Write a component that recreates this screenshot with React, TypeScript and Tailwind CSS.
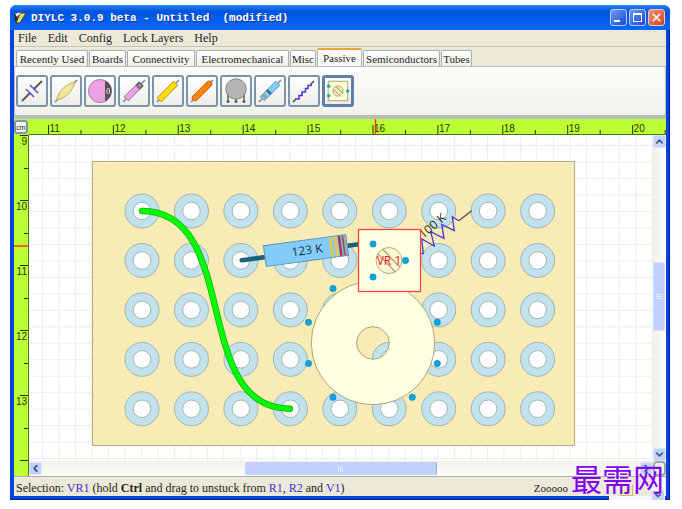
import React, { useState } from 'react';
import { ChevronDown, ChevronLeft, ChevronUp, X } from 'lucide-react';

const MENUS = ['File', 'Edit', 'Config', 'Lock Layers', 'Help'];

const TABS = [
  { label: 'Recently Used', width: 'w-[72px]' },
  { label: 'Boards', width: 'w-[37px]' },
  { label: 'Connectivity', width: 'w-[68px]' },
  { label: 'Electromechanical', width: 'w-[93px]' },
  { label: 'Misc', width: 'w-[26px]' },
  { label: 'Passive', width: 'w-[45px]' },
  { label: 'Semiconductors', width: 'w-[77px]' },
  { label: 'Tubes', width: 'w-[31px]' },
];

const PITCH = 49.45;
const PADS = Array.from({ length: 45 }, (_, i) => ({
  x: 113 + (i % 9) * PITCH,
  y: 76 + Math.floor(i / 9) * PITCH,
}));

const TRANSFORMER_PINS = [
  [304, 153.5], [279.5, 187.3], [279.5, 228.5], [304, 262.3],
  [383.3, 262.3], [408.3, 228.5], [408.3, 187.3],
];

const leads = (
  <path d="M5 27 10 22M22 10 27 5" stroke="#6f93a5" strokeWidth="1.6" />
);

const TOOLS = [
  {
    name: 'Capacitor',
    icon: (
      <>
        <path d="M6 26 14 18M18 14 26 6" stroke="#555" strokeWidth="1.8" />
        <path d="M10 14 18 22M14 10 22 18" stroke="#5a50d8" strokeWidth="1.6" />
      </>
    ),
  },
  {
    name: 'Film capacitor',
    icon: (
      <>
        {leads}
        <path d="M7 25C8 17 15 9 25 7 23 16 16 23 7 25Z" fill="#f3e69b" stroke="#b8ac66" />
      </>
    ),
  },
  {
    name: 'Electrolytic capacitor',
    icon: (
      <>
        <circle cx="16" cy="16" r="11.5" fill="#eda2e3" stroke="#ad75a8" />
        <path d="M21 5.6A11.5 11.5 0 0 1 21 26.400Z" fill="#57505a" />
        <rect x="23" y="13.5" width="2.5" height="5" rx="1" fill="none" stroke="#ddd" />
      </>
    ),
  },
  {
    name: 'Axial capacitor',
    icon: (
      <>
        {leads}
        <path d="M8 24 23 9" stroke="#a36f9f" strokeWidth="6.5" />
        <path d="M8.5 23.5 22.5 9.5" stroke="#eda2e3" strokeWidth="4.8" />
        <path d="M19.5 12.5 23.500 8.500" stroke="#6f6770" strokeWidth="6.5" />
        <circle cx="21.500" cy="10.500" r="1.200" fill="#aaa" />
      </>
    ),
  },
  {
    name: 'Inductor',
    icon: (
      <>
        {leads}
        <path d="M7 25 24 8" stroke="#b39a20" strokeWidth="6.5" />
        <path d="M7.5 24.5 23.5 8.5" stroke="#ffdc08" strokeWidth="4.8" />
      </>
    ),
  },
  {
    name: 'Radial inductor',
    icon: (
      <>
        {leads}
        <path d="M9 23 23 9" stroke="#b86018" strokeWidth="6.5" strokeLinecap="round" />
        <path d="M9 23 23 9" stroke="#ff8408" strokeWidth="5" strokeLinecap="round" />
      </>
    ),
  },
  {
    name: 'Potentiometer',
    icon: (
      <>
        <path d="M8 18V26M16 20V26M24 18V26" stroke="#777" strokeWidth="1.8" />
        <circle cx="16" cy="14" r="10.2" fill="#b5b5b5" stroke="#858585" />
        <circle cx="8" cy="26.500" r="1.600" fill="#666" />
        <circle cx="16" cy="26.500" r="1.600" fill="#666" />
        <circle cx="24" cy="26.500" r="1.600" fill="#666" />
      </>
    ),
  },
  {
    name: 'Resistor',
    icon: (
      <>
        {leads}
        <path d="M8 24 24 8" stroke="#5f9dc4" strokeWidth="6.5" />
        <path d="M8.5 23.5 23.5 8.5" stroke="#85cbf8" strokeWidth="4.8" />
        <path d="M9.500 22.500 12 20" stroke="#8da7a7" strokeWidth="6" />
        <path d="M14 18 15.800 16.200" stroke="#34718f" strokeWidth="6" />
      </>
    ),
  },
  {
    name: 'Resistor symbol',
    icon: (
      <>
        <path d="M5 27 8 24M23 9 26 6" stroke="#444" strokeWidth="1.5" />
        <path d="M7 24H11V20.500H14V17H17.500V13.500H20V10.500H23V8.500" fill="none" stroke="#463ddd" strokeWidth="1.6" />
      </>
    ),
  },
  {
    name: 'Trimmer',
    icon: (
      <>
        <rect x="5.500" y="5.500" width="21" height="21" fill="#ffffdc" stroke="#aaa36a" />
        <circle cx="16" cy="16" r="5.500" fill="#f6edb9" stroke="#aaa36a" />
        <path d="M11.500 14.500 17.500 20.500M14 11.500 20.500 18" stroke="#8d895c" />
        <circle cx="6" cy="11" r="1.900" fill="#23a6aa" />
        <circle cx="6" cy="21" r="1.900" fill="#23a6aa" />
        <circle cx="26.500" cy="16" r="1.900" fill="#23a6aa" />
      </>
    ),
  },
];

function TitleBar() {
  return (
    <header className="flex h-[25px] shrink-0 items-center gap-[5px] rounded-t-[6px] bg-linear-to-b from-[#2c86f4] via-[#0054df] via-25% to-[#0768ff] pr-[5px] pl-[4px]">
      <svg className="h-[13px] w-[12px]" viewBox="0 0 12 13" aria-hidden="true">
        <path d="M0 2H7L4 11H1Z" fill="#222e3d" />
        <path d="M6 2H12L6 12H2Z" fill="#e8d86c" stroke="#473f2c" />
        <path d="M1 2.500 7 1.500 3 6Z" fill="#eee" />
      </svg>
      <h1 className="flex-1 whitespace-pre font-['Liberation_Mono',monospace] text-[11px] font-bold text-white [text-shadow:1px_1px_#123a9a]">
        DIYLC 3.0.9 beta - Untitled  (modified)
      </h1>
      <div className="flex gap-[2px]">
        <button aria-label="Minimize" className="flex size-[17px] items-end rounded-[3px] border border-[#b7cdf8] bg-linear-to-br from-[#7197f4] to-[#1746d5] p-[3px]">
          <span className="h-[2px] w-[6px] bg-white" />
        </button>
        <button aria-label="Maximize" className="flex size-[17px] items-center justify-center rounded-[3px] border border-[#b7cdf8] bg-linear-to-br from-[#7197f4] to-[#1746d5]">
          <span className="size-[9px] border border-t-2 border-white" />
        </button>
        <button aria-label="Close" className="flex size-[17px] items-center justify-center rounded-[3px] border border-[#f2c9bd] bg-linear-to-br from-[#f09275] to-[#d43d12]">
          <X className="size-[13px] text-white" strokeWidth={3} />
        </button>
      </div>
    </header>
  );
}

function HorizontalRuler() {
  return (
    <svg className="h-[16px] min-w-0 flex-1 border-b border-[#4f7319] font-['Liberation_Sans',sans-serif]" aria-label="Horizontal ruler">
      {Array.from({ length: 10 }, (_, i) => {
        const x = 19.5 + i * 64.9;
        return (
          <g key={i}>
            <path d={`M${x} 6V15M${x + 32.5} 11V15`} stroke="#27360b" />
            <text x={x + 1} y="13" fontSize="10" fill="#27360b">{11 + i}</text>
          </g>
        );
      })}
      <path d="M346.5 0V15" stroke="#f8301c" strokeWidth="1.4" />
    </svg>
  );
}

function VerticalRuler() {
  return (
    <svg className="h-full w-[15px] shrink-0 border-r border-[#4f7319]" aria-label="Vertical ruler">
      {Array.from({ length: 6 }, (_, i) => {
        const y = 0.5 + i * 65;
        return (
          <g key={i}>
            <path d={`M6 ${y}H14M10 ${y + 33}H14`} stroke="#27360b" />
            {i < 5 && <text x="13" y={y + 9} textAnchor="end" fontSize="10" fill="#27360b">{9 + i}</text>}
          </g>
        );
      })}
      <path d="M0 111H14" stroke="#f8301c" strokeWidth="1.4" />
    </svg>
  );
}

function Board() {
  return (
    <svg className="min-h-0 w-full flex-1 bg-white font-['Open_Sans',sans-serif]" role="img" aria-label="Circuit layout">
      <defs>
        <pattern id="grid" x="13" y="10" width="16.48" height="16.48" patternUnits="userSpaceOnUse">
          <path d="M0 .5H16.5M.5 0V16.5" stroke="#ececec" fill="none" />
        </pattern>
      </defs>
      <rect width="100%" height="100%" fill="url(#grid)" />
      <rect x="63.5" y="26.5" width="482" height="284" fill="#f8ebb5" stroke="#b5ac83" />

      {PADS.map(({ x, y }) => (
        <g key={`${x}-${y}`} stroke="#a4b3ae">
          <circle cx={x} cy={y} r="17" fill="#c1e2ec" />
          <circle cx={x} cy={y} r="8.8" fill="#fff" />
        </g>
      ))}

      {/* jumper wire */}
      <g fill="none" strokeLinecap="round">
        <path d="M113 76C213 76 161 273.800 261 273.800" stroke="#0bbd0b" strokeWidth="6.500" />
        <path d="M113 76C213 76 161 273.800 261 273.800" stroke="#08f808" strokeWidth="4.800" />
      </g>

      {/* R1 */}
      <g transform="translate(277 115.500) rotate(-7.800)">
        <path d="M-65 1H55" stroke="#1e6280" strokeWidth="4.500" strokeLinecap="round" />
        <rect x="-41.5" y="-10.5" width="83" height="21" fill="#83cbfb" stroke="#6099b8" />
        <path d="M25.500 -10V10M30.500 -10V10" stroke="#d8c95d" strokeWidth="3" />
        <path d="M34.500 -10V10" stroke="#bd294e" strokeWidth="2.500" />
        <path d="M38 -10V10" stroke="#84645d" strokeWidth="2" />
        <path d="M40 -10V10" stroke="#a5a8a1" strokeWidth="1.500" />
        <text x="1" y="4" textAnchor="middle" fontSize="12" fill="#20313a">123 K</text>
      </g>

      {/* R2 */}
      <path d="M442.700 75.700 429.700 85.700" stroke="#5a4c3a" strokeWidth="1.300" />
      <path
        d="M429.700 85.700 423.300 81.700 425.300 95.700 412.700 89.300 415 103.300 401.700 96.700 405.300 111 392.700 104 394.300 118.300 390 119"
        fill="none"
        stroke="#4239d8"
        strokeWidth="1.300"
      />
      <text transform="translate(406 94) rotate(-41)" textAnchor="middle" fontSize="12" fill="#2a2a24">100 K</text>

      {/* toroid */}
      <path
        d="M282.300 208a61.700 61.700 0 1 0 123.400 0a61.700 61.700 0 1 0-123.400 0M327.700 208a16.300 16.300 0 1 0 32.600 0a16.300 16.300 0 1 0-32.600 0"
        fill="#ffffe1"
        fillRule="evenodd"
        stroke="#aaa577"
      />
      {TRANSFORMER_PINS.map(([x, y]) => (
        <circle key={`${x}-${y}`} cx={x} cy={y} r="3.2" fill="#08a4e2" stroke="#1688a9" strokeWidth=".5" />
      ))}

      {/* VR1, currently selected */}
      <rect x="329.5" y="94.5" width="62" height="62" fill="#ffffe1" stroke="#f3473f" strokeWidth="1.3" />
      <circle cx="360" cy="125.5" r="13" fill="#fbf7d2" stroke="#b8b07c" />
      <path d="M349 119 366.500 137M353.500 114 371 132.500" stroke="#aaa06e" strokeWidth="1.200" />
      <text x="360" y="130" textAnchor="middle" fontSize="12" fill="#f02020">VR 1</text>
      {[[344, 109], [344, 142], [376.5, 125.5]].map(([x, y]) => (
        <circle key={`${x}-${y}`} cx={x} cy={y} r="3.2" fill="#08a4e2" stroke="#1688a9" strokeWidth=".5" />
      ))}
    </svg>
  );
}

const scrollButton = 'flex size-[13px] shrink-0 items-center justify-center rounded-[2px] border border-[#dce6fc] bg-[#c3d3fb] text-[#46608f]';

export default function App() {
  const [tab, setTab] = useState('Passive');
  const [tool, setTool] = useState('Trimmer');

  return (
    <div className="relative flex h-screen flex-col overflow-hidden bg-white pt-[5px] pr-[12px] pb-[9px] pl-[10px] font-['Liberation_Serif',serif] text-[11px] leading-[14px] text-[#242424]">
      <div className="flex min-h-0 flex-1 flex-col rounded-t-[7px] bg-[#0a43dc] shadow-[inset_-1px_-1px_#001f96]">
        <TitleBar />
        <div className="mx-[4px] mb-[4px] flex min-h-0 flex-1 flex-col bg-[#ece9d8]">
          <nav className="flex h-[17px] shrink-0 items-center gap-[11px] border-b border-[#c9c6b8] pl-[4px] text-[12px]">
            {MENUS.map(m => <button key={m}>{m}</button>)}
          </nav>

          <div className="flex h-[19px] shrink-0 items-end gap-px pl-[2px]" role="tablist">
            {TABS.map(t => (
              <button
                key={t.label}
                role="tab"
                aria-selected={tab === t.label}
                onClick={() => setTab(t.label)}
                className={`${t.width} shrink-0 whitespace-nowrap rounded-t-[2px] border-x border-t text-center ${
                  tab === t.label
                    ? 'h-[18px] border-x-[#a9b5b8] border-t-2 border-t-[#eda33a] bg-[#fcfcfa]'
                    : 'h-[16px] border-[#a3b1b5] bg-linear-to-b from-white to-[#f1f0e8]'
                }`}
              >
                {t.label}
              </button>
            ))}
          </div>

          {/* Component toolbar */}
          <div className="flex h-[50px] shrink-0 items-center gap-[2px] border border-[#b4bcbb] bg-linear-to-b from-[#fcfcfa] to-[#f3f2eb] pl-px">
            {TOOLS.map(t => (
              <button
                key={t.name}
                aria-label={t.name}
                onClick={() => setTool(t.name)}
                className={`size-[32px] rounded-[3px] bg-linear-to-b from-white to-[#eeede6] ${
                  tool === t.name ? 'border-3 border-[#5e7fae]' : 'border-2 border-[#7b96a9]'
                }`}
              >
                <svg viewBox="2 2 28 28" className="size-full" fill="none">{t.icon}</svg>
              </button>
            ))}
          </div>
          <div className="h-[3px] shrink-0 bg-[#b9c1bd]" />

          {/* Workspace */}
          <div className="flex h-[16px] shrink-0 bg-[#bdff35]">
            <button className="my-px mr-px h-[14px] w-[14px] rounded-[3px] border-2 border-[#8099a0] bg-[#f6f7f5] font-['Liberation_Sans',sans-serif] text-[7px] leading-[9px]">
              cm
            </button>
            <HorizontalRuler />
          </div>
          <div className="flex min-h-0 flex-1">
            <div className="w-[15px] shrink-0 bg-[#bdff35] font-['Liberation_Sans',sans-serif]">
              <VerticalRuler />
            </div>
            <div className="flex min-w-0 flex-1 flex-col">
              <Board />
              <div className="flex h-[15px] shrink-0 items-center bg-linear-to-b from-[#f1f0ea] to-[#fdfdfa]">
                <button aria-label="Scroll left" className={scrollButton}><ChevronLeft className="size-[11px]" strokeWidth={4} /></button>
                <div className="flex flex-1">
                  <div className="ml-[34%] flex h-[13px] w-[32%] items-center justify-center gap-px rounded-[2px] border-r border-[#91a8df] bg-[#c2d1fc]">
                    <span className="h-[6px] w-px bg-[#e6edff]" />
                    <span className="h-[6px] w-px bg-[#e6edff]" />
                    <span className="h-[6px] w-px bg-[#e6edff]" />
                  </div>
                </div>
                <button aria-label="Scroll right" className={scrollButton}><ChevronLeft className="size-[11px] rotate-180" strokeWidth={4} /></button>
              </div>
            </div>
            <div className="flex w-[13px] shrink-0 flex-col bg-linear-to-r from-[#f1f0ea] to-[#fdfdfa]">
              <button aria-label="Scroll up" className={scrollButton}><ChevronUp className="size-[11px]" strokeWidth={4} /></button>
              <div className="flex min-h-0 flex-1 flex-col">
                <div className="h-[38%] shrink-0" />
                <div className="flex h-[23%] w-[12px] flex-col items-center justify-center gap-px rounded-[2px] border border-[#d8e2fd] bg-[#c2d1fc]">
                  <span className="h-px w-[6px] bg-[#e6edff]" />
                  <span className="h-px w-[6px] bg-[#e6edff]" />
                  <span className="h-px w-[6px] bg-[#e6edff]" />
                </div>
              </div>
              <button aria-label="Scroll down" className={scrollButton}><ChevronDown className="size-[11px]" strokeWidth={4} /></button>
              <button aria-label="Navigate" className="h-[15px] shrink-0 rounded-[4px] border-2 border-[#9da5a8] bg-[#f4f4f2]" />
            </div>
          </div>

          <footer className="flex h-[20px] shrink-0 items-end justify-between border-t border-[#a5b1b1] pr-[98px] pb-px pl-[2px] text-[12px]">
            <p>
              Selection: <span className="text-[#3a32d8]">VR1</span>{' '}
              (hold <b>Ctrl</b> and drag to unstuck from{' '}
              <span className="text-[#3a32d8]">R1</span>, <span className="text-[#3a32d8]">R2</span> and{' '}
              <span className="text-[#3a32d8]">V1</span>)
            </p>
            <span className="text-[11px]">Zooooo</span>
          </footer>
        </div>
      </div>

      {/* Site mark over the window's corner */}
      <div className="absolute right-[17px] bottom-[9px] flex h-[4px] w-[56px] items-end justify-between bg-[#f4f6fb] pl-[10px]">
        <span className="mb-[4px] h-[11px] w-[14px] border-r border-b border-[#c9bb80] bg-[#f8ebb5]" />
        <div className="flex h-[23px] w-[13px] flex-col justify-end bg-white">
          <ChevronDown className="h-[9px] w-[12px] bg-[#c3d3fb] text-[#46608f]" strokeWidth={4} />
        </div>
      </div>
      <p className="absolute right-[18px] bottom-[14px] font-['Noto_Sans_CJK_SC',sans-serif] text-[31px] leading-[34px] text-[#8000ff]">
        最需网
      </p>
    </div>
  );
}
